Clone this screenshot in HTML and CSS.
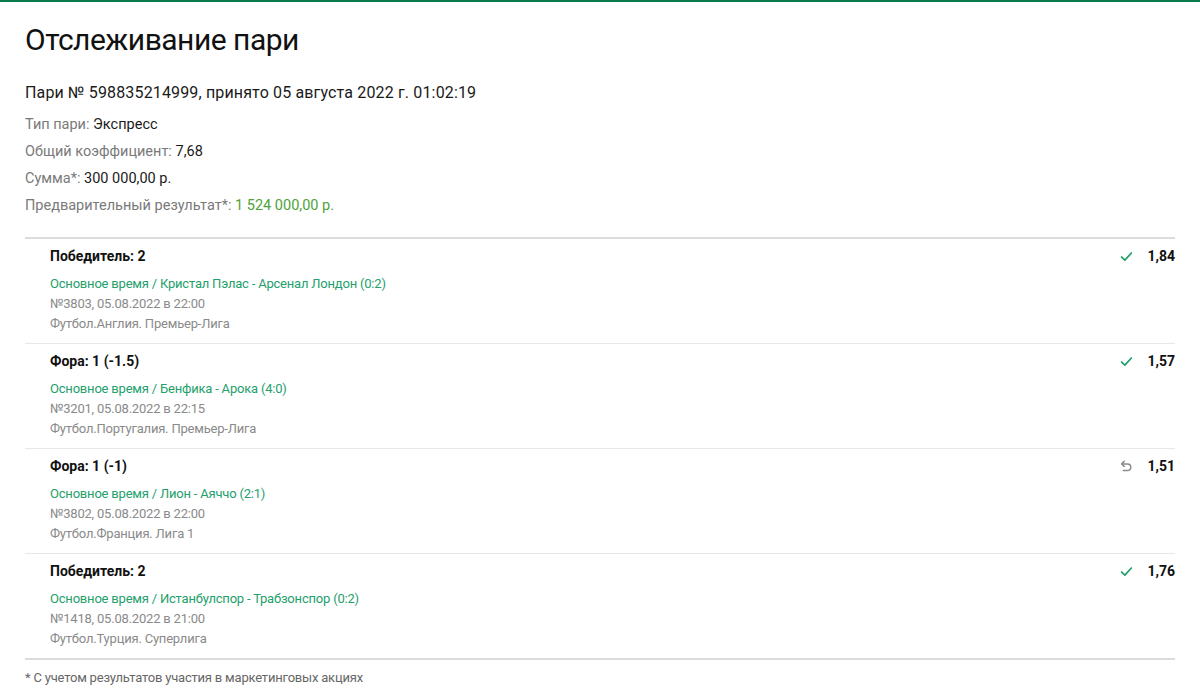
FILE: index.html
```html
<!DOCTYPE html>
<html lang="ru">
<head>
	<meta charset="UTF-8">
	<title>Отслеживание пари</title>
	<link rel="stylesheet" href="styles.css">
</head>
<body>
	<div class="pagina">
		<h1 class="titulo">Отслеживание пари</h1>
		<p class="numeroPari">Пари № 598835214999, принято 05 августа 2022 г. 01:02:19</p>

		<div class="datos">
			<p><span class="etiqueta">Тип пари:</span> Экспресс</p>
			<p><span class="etiqueta">Общий коэффициент:</span> 7,68</p>
			<p><span class="etiqueta">Сумма*:</span> 300 000,00 р.</p>
			<p><span class="etiqueta">Предварительный результат*:</span> <span class="resultado">1 524 000,00 р.</span></p>
		</div>

		<ul class="eventos">
			<li class="evento">
				<div class="info">
					<div class="apuesta">Победитель: 2</div>
					<a class="partido" href="#">Основное время / Кристал Пэлас - Арсенал Лондон (0:2)</a>
					<div class="detalle">№3803, 05.08.2022 в 22:00</div>
					<div class="detalle">Футбол.Англия. Премьер-Лига</div>
				</div>
				<div class="cuota">
					<svg class="icono ganado" viewBox="0 0 12 12"><path d="M1.5 6.5 L4.5 9.3 L10.5 2.8"/></svg>
					<span>1,84</span>
				</div>
			</li>
			<li class="evento">
				<div class="info">
					<div class="apuesta">Фора: 1 (-1.5)</div>
					<a class="partido" href="#">Основное время / Бенфика - Арока (4:0)</a>
					<div class="detalle">№3201, 05.08.2022 в 22:15</div>
					<div class="detalle">Футбол.Португалия. Премьер-Лига</div>
				</div>
				<div class="cuota">
					<svg class="icono ganado" viewBox="0 0 12 12"><path d="M1.5 6.5 L4.5 9.3 L10.5 2.8"/></svg>
					<span>1,57</span>
				</div>
			</li>
			<li class="evento">
				<div class="info">
					<div class="apuesta">Фора: 1 (-1)</div>
					<a class="partido" href="#">Основное время / Лион - Аяччо (2:1)</a>
					<div class="detalle">№3802, 05.08.2022 в 22:00</div>
					<div class="detalle">Футбол.Франция. Лига 1</div>
				</div>
				<div class="cuota">
					<!-- возврат -->
					<svg class="icono devuelto" viewBox="0 0 14 14"><path d="M4.5 1.5 L1.8 4.2 L4.5 6.9"/><path d="M2 4.2 H8 A3.6 3.6 0 0 1 8 11.4 H3.5"/></svg>
					<span>1,51</span>
				</div>
			</li>
			<li class="evento">
				<div class="info">
					<div class="apuesta">Победитель: 2</div>
					<a class="partido" href="#">Основное время / Истанбулспор - Трабзонспор (0:2)</a>
					<div class="detalle">№1418, 05.08.2022 в 21:00</div>
					<div class="detalle">Футбол.Турция. Суперлига</div>
				</div>
				<div class="cuota">
					<svg class="icono ganado" viewBox="0 0 12 12"><path d="M1.5 6.5 L4.5 9.3 L10.5 2.8"/></svg>
					<span>1,76</span>
				</div>
			</li>
		</ul>

		<p class="nota">* С учетом результатов участия в маркетинговых акциях</p>
	</div>
</body>
</html>
```

FILE: styles.css
```css
body{
	margin: 0;
	font-family: Roboto, "Liberation Sans", sans-serif;
	color: #1a1a1a;
	background: #fff;
	border-top: 2px solid #0b7a4b;
}

.pagina{
	padding: 0 25px;
}

.titulo{
	margin: 0;
	padding-top: 18px;
	font-size: 30px;
	font-weight: 400;
	line-height: 40px;
	letter-spacing: -0.5px;
	color: #111;
}

.numeroPari{
	margin: 22px 0 0;
	font-size: 16px;
	line-height: 22px;
	letter-spacing: 0.15px;
}

.datos{
	margin-top: 7px;
}

.datos p{
	margin: 0;
	font-size: 14.5px;
	line-height: 27px;
}

.etiqueta{
	color: #7a7a7a;
}

.resultado{
	color: #4ea33a;
}

.eventos{
	list-style: none;
	margin: 18px 0 0;
	padding: 0;
	border-top: 2px solid #dcdcdc;
	border-bottom: 2px solid #dcdcdc;
}

.evento{
	display: flex;
	justify-content: space-between;
	padding: 7px 0 9px 25px;
	border-top: 1px solid #e8e8e8;
}

.evento:first-child{
	padding-top: 7px;
	border-top: none;
}

.info{
	display: flex;
	flex-direction: column;
	font-size: 13px;
	line-height: 20px;
	letter-spacing: -0.2px;
}

.apuesta{
	font-size: 14px;
	font-weight: 700;
	letter-spacing: 0;
	color: #111;
	margin-bottom: 8px;
}

.partido{
	color: #23a06b;
	text-decoration: none;
}

.detalle{
	color: #8a8a8a;
}

.cuota{
	display: flex;
	align-items: center;
	gap: 14px;
	height: 20px;
	font-size: 14px;
	font-weight: 700;
	color: #111;
}

.icono{
	width: 13px;
	height: 13px;
	fill: none;
	stroke-width: 1.6;
	stroke-linecap: round;
	stroke-linejoin: round;
}

.ganado{
	stroke: #23a06b;
}

.devuelto{
	stroke: #8a8a8a;
}

.nota{
	margin: 8px 0 0;
	font-size: 13px;
	line-height: 20px;
	letter-spacing: -0.2px;
	color: #666;
}
```
